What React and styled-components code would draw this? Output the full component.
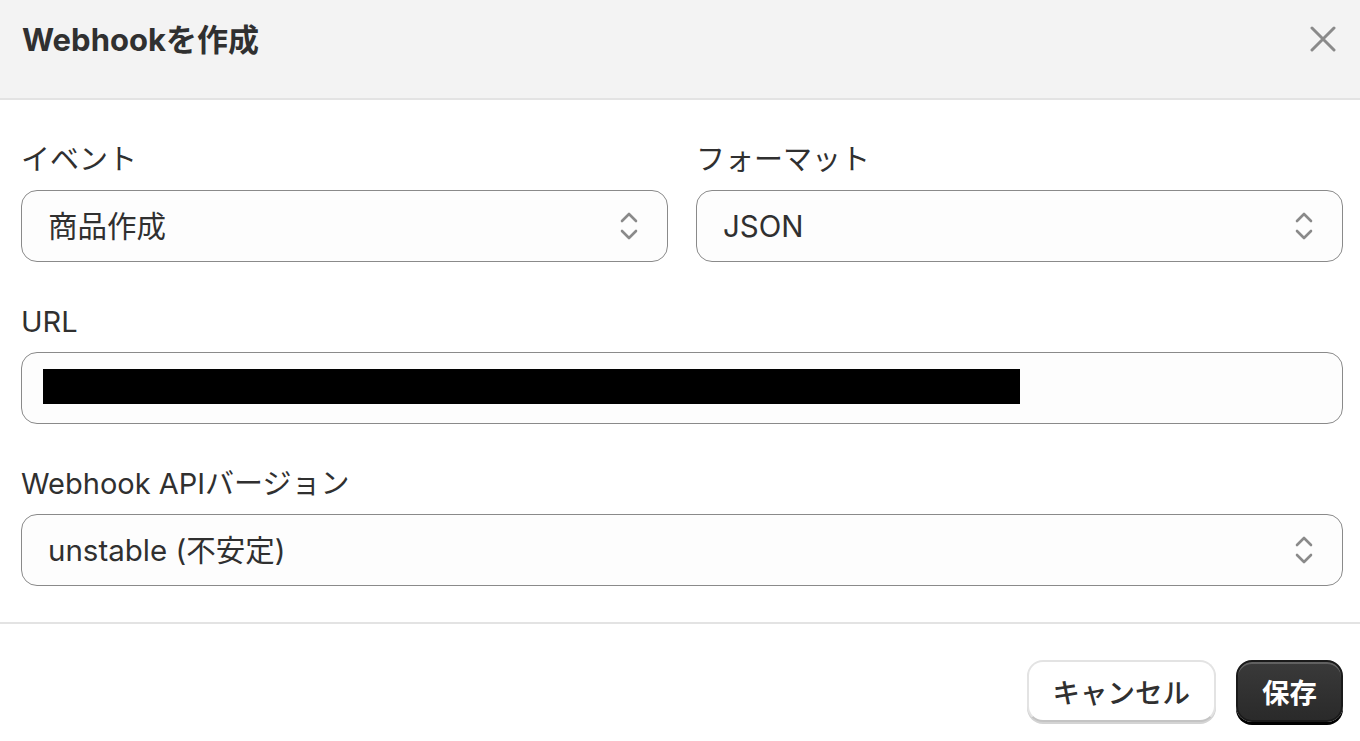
import styled, { createGlobalStyle } from 'styled-components';

const GlobalStyle = createGlobalStyle`
    html, body {
        margin: 0;
        padding: 0;
        background: #ffffff;
    }
    body {
        font-family: Inter, "Noto Sans CJK JP", sans-serif;
        color: #303030;
    }
`

const Chevrons = () => (
    <svg width="20" height="32" viewBox="0 0 20 32" fill="none">
        <path d="M3 11 L10 4 L17 11" stroke="#8a8a8a" strokeWidth="2.6" strokeLinecap="round" strokeLinejoin="round" />
        <path d="M3 21 L10 28 L17 21" stroke="#8a8a8a" strokeWidth="2.6" strokeLinecap="round" strokeLinejoin="round" />
    </svg>
)

const CloseIcon = () => (
    <svg width="26" height="26" viewBox="0 0 26 26" fill="none">
        <path d="M2 2 L24 24 M24 2 L2 24" stroke="#8a8a8a" strokeWidth="3" strokeLinecap="round" />
    </svg>
)

const SelectField = ({ value }) => (
    <SelectBox>
        <SelectValue>{value}</SelectValue>
        <IconWrap><Chevrons /></IconWrap>
    </SelectBox>
)

const App = () => {
    return (
        <Modal>
            <GlobalStyle />
            <Header>
                <Title>Webhookを作成</Title>
                <CloseButton aria-label="閉じる"><CloseIcon /></CloseButton>
            </Header>
            <Body>
                <Row>
                    <Field>
                        <Label>イベント</Label>
                        <SelectField value="商品作成" />
                    </Field>
                    <Field>
                        <Label>フォーマット</Label>
                        <SelectField value="JSON" />
                    </Field>
                </Row>
                <Field>
                    <Label>URL</Label>
                    <TextInput>
                        <Redacted />
                    </TextInput>
                </Field>
                <Field>
                    <Label>Webhook APIバージョン</Label>
                    <SelectField value="unstable (不安定)" />
                </Field>
            </Body>
            <Footer>
                <SecondaryButton>キャンセル</SecondaryButton>
                <PrimaryButton>保存</PrimaryButton>
            </Footer>
        </Modal>
    )
}

export default App;

const Modal = styled.div`
    width: 1360px;
    height: 741px;
    overflow: hidden;
    background: #ffffff;
`

const Header = styled.div`
    height: 100px;
    box-sizing: border-box;
    background: #f3f3f3;
    border-bottom: 2px solid #e3e3e3;
    display: flex;
    align-items: flex-start;
    justify-content: space-between;
    padding: 20px 24px 0 22px;
`

const Title = styled.h1`
    margin: 0;
    font-size: 31px;
    line-height: 40px;
    font-weight: 700;
    color: #303030;
`

const CloseButton = styled.button`
    border: none;
    background: none;
    padding: 0;
    margin-top: 6px;
    display: flex;
    cursor: pointer;
`

const Body = styled.div`
    padding: 40px 17px 36px 21px;
    display: flex;
    flex-direction: column;
    gap: 40px;
    border-bottom: 2px solid #e3e3e3;
`

const Row = styled.div`
    display: grid;
    grid-template-columns: 1fr 1fr;
    gap: 28px;
`

const Field = styled.div`
    display: flex;
    flex-direction: column;
    gap: 10px;
`

const Label = styled.label`
    font-size: 29px;
    line-height: 40px;
    color: #303030;
`

const SelectBox = styled.div`
    height: 72px;
    box-sizing: border-box;
    border: 1.5px solid #8a8a8a;
    border-radius: 16px;
    background: #fdfdfd;
    display: flex;
    align-items: center;
    justify-content: space-between;
    padding: 0 28px 0 26px;
`

const SelectValue = styled.span`
    font-size: 29.5px;
    line-height: 40px;
    color: #303030;
`

const IconWrap = styled.span`
    display: flex;
    align-items: center;
`

const TextInput = styled.div`
    height: 72px;
    box-sizing: border-box;
    border: 1.5px solid #8a8a8a;
    border-radius: 16px;
    background: #fdfdfd;
    display: flex;
    align-items: center;
    padding: 0 21px 3px;
`

const Redacted = styled.div`
    width: 977px;
    height: 35px;
    background: #000000;
`

const Footer = styled.div`
    display: flex;
    justify-content: flex-end;
    align-items: center;
    gap: 20px;
    padding: 36px 17px 0 0;
`

const SecondaryButton = styled.button`
    height: 62px;
    padding: 0 24px;
    font-family: inherit;
    font-size: 27.5px;
    font-weight: 500;
    color: #303030;
    background: #ffffff;
    border: 2px solid #e3e3e3;
    border-bottom-color: #c4c4c4;
    border-radius: 16px;
    box-shadow: 0 2px 0 #d4d4d4;
`

const PrimaryButton = styled.button`
    height: 62px;
    padding: 0 24px;
    font-family: inherit;
    font-size: 27.5px;
    font-weight: 700;
    color: #ffffff;
    background: linear-gradient(180deg, #3a3a3a 0%, #303030 60%, #2a2a2a 100%);
    border: 2px solid #1a1a1a;
    border-radius: 16px;
    box-shadow: inset 0 2px 0 rgba(255, 255, 255, 0.2), 0 3px 0 #000000;
`
